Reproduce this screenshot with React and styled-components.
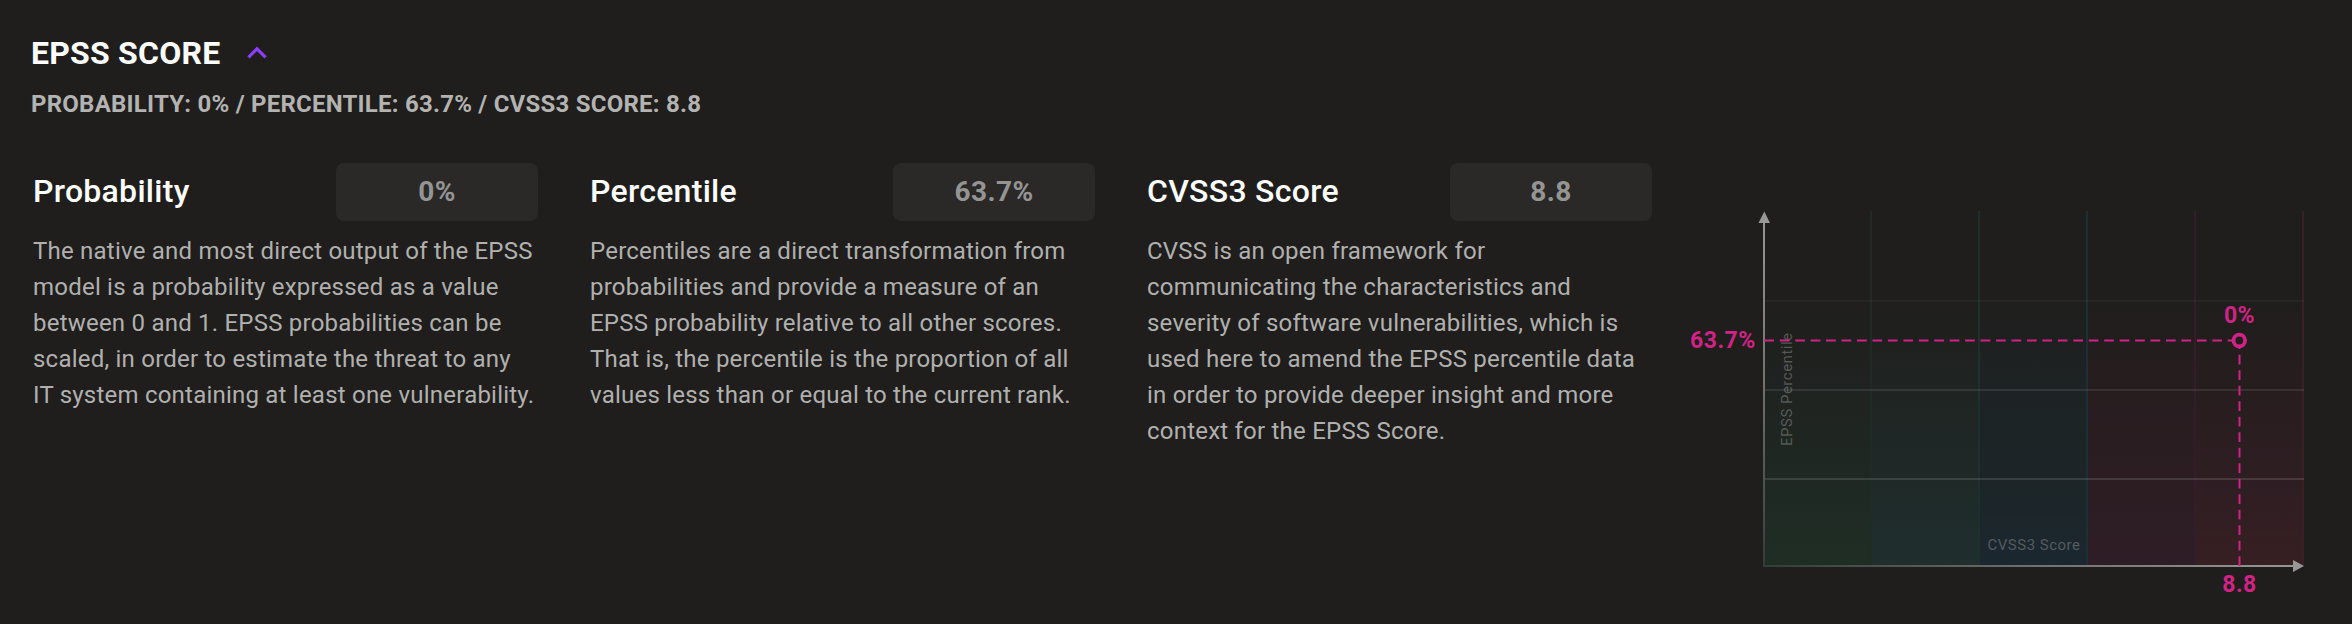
import React from "react";
import styled, { createGlobalStyle } from "styled-components";

const Global = createGlobalStyle`
  *, *::before, *::after { box-sizing: border-box; }
  body { margin: 0; background: #1f1e1c; }
`;

const Panel = styled.section`
  width: 2352px;
  height: 624px;
  padding: 35px 0 0 31px;
  background: #1f1e1c;
  font-family: Roboto, sans-serif;
  overflow: hidden;
`;

const Header = styled.header`
  display: flex;
  align-items: center;
  height: 36px;
  gap: 26px;
`;

const Title = styled.h2`
  margin: 0;
  font-size: 32px;
  line-height: 36px;
  font-weight: 700;
  letter-spacing: 0.22px;
  color: #fff;
`;

const Chevron = styled.svg`
  display: block;
  width: 22px;
  height: 14px;
  fill: none;
  stroke: #8b3dff;
  stroke-width: 3.2;
`;

const Summary = styled.p`
  margin: 18px 0 0;
  font-size: 24px;
  line-height: 30px;
  font-weight: 700;
  letter-spacing: 0.23px;
  color: #b3b3b2;
`;

const Body = styled.div`
  display: flex;
  align-items: flex-start;
  margin-top: 44px;
`;

const Columns = styled.div`
  display: grid;
  grid-template-columns: repeat(3, 507px);
  column-gap: 50px;
`;

const Metric = styled.article`
  padding-left: 2px;
`;

const MetricHead = styled.div`
  display: flex;
  align-items: center;
  justify-content: space-between;
  height: 58px;
`;

const MetricName = styled.h3`
  margin: 0;
  padding-bottom: 2px;
  font-size: 32px;
  line-height: 40px;
  font-weight: 500;
  letter-spacing: 0.28px;
  color: #fff;
`;

const Value = styled.output`
  display: flex;
  align-items: center;
  justify-content: center;
  width: 202px;
  height: 58px;
  padding-bottom: 1px;
  border-radius: 8px;
  background: #2a2928;
  color: #949493;
  font-size: 28px;
  font-weight: 700;
  letter-spacing: 0.4px;
`;

const Description = styled.p`
  margin: 12px 0 0;
  font-size: 24px;
  line-height: 36px;
  letter-spacing: 0.22px;
  white-space: pre;
  color: #b0b0af;
`;

const Chart = styled.svg`
  display: block;
  width: 650px;
  height: 400px;
  margin: 37px 0 0 50px;
  overflow: visible;
`;

const AxisLabel = styled.text`
  font-size: 15px;
  letter-spacing: 0.5px;
  fill: #fff;
  fill-opacity: 0.25;
`;

const PointLabel = styled.text`
  font-size: 23px;
  font-weight: 700;
  letter-spacing: 0.5px;
  fill: #d02385;
`;

const metrics = [
  {
    name: "Probability",
    value: "0%",
    text: "The native and most direct output of the EPSS\nmodel is a probability expressed as a value\nbetween 0 and 1. EPSS probabilities can be\nscaled, in order to estimate the threat to any\nIT system containing at least one vulnerability.",
  },
  {
    name: "Percentile",
    value: "63.7%",
    text: "Percentiles are a direct transformation from\nprobabilities and provide a measure of an\nEPSS probability relative to all other scores.\nThat is, the percentile is the proportion of all\nvalues less than or equal to the current rank.",
  },
  {
    name: "CVSS3 Score",
    value: "8.8",
    text: "CVSS is an open framework for\ncommunicating the characteristics and\nseverity of software vulnerabilities, which is\nused here to amend the EPSS percentile data\nin order to provide deeper insight and more\ncontext for the EPSS Score.",
  },
];

const bands = [
  { x: 1765, id: "green", low: "#1f2e25", deep: "#1f2923", mid: "#1f2321", line: "#1f2b25" },
  { x: 1872, id: "teal", low: "#1f2f2e", deep: "#1f2a29", mid: "#1f2422", line: "#1e302d" },
  { x: 1980, id: "blue", low: "#1b2730", deep: "#1c2528", mid: "#1d2324", line: "#1b2f34" },
  { x: 2088, id: "purple", low: "#2e1d26", deep: "#2c1d23", mid: "#271d1f", line: "#341c29" },
  { x: 2196, id: "red", low: "#371f22", deep: "#2f1e23", mid: "#271d1f", line: "#391f26" },
];

const rows = [
  { y: 301, opacity: 0.04 },
  { y: 390, opacity: 0.09 },
  { y: 479, opacity: 0.12 },
];

function ScoreChart() {
  return (
    <Chart viewBox="1702 200 650 400" role="img" aria-label="EPSS percentile by CVSS3 score">
      <defs>
        {bands.map((b) => (
          <linearGradient key={b.id} id={b.id} x1="0" y1="212" x2="0" y2="566" gradientUnits="userSpaceOnUse">
            <stop offset="0.24" stopColor="#1f1e1c" />
            <stop offset="0.5" stopColor={b.mid} />
            <stop offset="0.8" stopColor={b.deep} />
            <stop offset="1" stopColor={b.low} />
          </linearGradient>
        ))}
        <linearGradient id="yAxis" x1="0" y1="212" x2="0" y2="566" gradientUnits="userSpaceOnUse">
          <stop offset="0" stopColor="#989896" />
          <stop offset="0.5" stopColor="#70706e" />
          <stop offset="1" stopColor="#343c37" />
        </linearGradient>
        <linearGradient id="xAxis" x1="1763" y1="0" x2="2304" y2="0" gradientUnits="userSpaceOnUse">
          <stop offset="0" stopColor="#343c37" />
          <stop offset="0.5" stopColor="#70706e" />
          <stop offset="1" stopColor="#989896" />
        </linearGradient>
      </defs>
      {bands.map((b) => (
        <rect key={b.id} x={b.x} y="212" width={b.id === "green" ? 107 : 108} height="353" fill={`url(#${b.id})`} />
      ))}
      {bands.map((b) => (
        <rect key={b.id} x={b.x + (b.id === "green" ? 105 : 106)} y="211" width="2" height="354" fill={b.line} />
      ))}
      {rows.map((r) => (
        <rect key={r.y} x="1763" y={r.y - 1} width="541" height="2" fill="#fff" fillOpacity={r.opacity} />
      ))}
      <AxisLabel x="1987.5" y="550">CVSS3 Score</AxisLabel>
      <AxisLabel transform="translate(1792 446) rotate(-90)">EPSS Percentile</AxisLabel>
      <rect x="1763" y="218" width="2" height="348" fill="url(#yAxis)" />
      <rect x="1763" y="565" width="536" height="2" fill="url(#xAxis)" />
      <path d="M1764.3 211.5L1770 223H1758.5Z" fill="#989896" />
      <path d="M2304 566L2293 560V572Z" fill="#989896" />
      <path d="M1764.3 340.5H2232" stroke="#d02385" strokeWidth="2" strokeDasharray="9.7 5.75" />
      <path d="M2239.5 566V348" stroke="#d02385" strokeWidth="2" strokeDasharray="9.7 5.8" />
      <circle cx="2239.3" cy="340.5" r="5.8" fill="none" stroke="#d02385" strokeWidth="3.8" />
      <PointLabel x="1690" y="348">63.7%</PointLabel>
      <PointLabel x="2239.5" y="323" textAnchor="middle">0%</PointLabel>
      <PointLabel x="2239.5" y="592" textAnchor="middle">8.8</PointLabel>
    </Chart>
  );
}

export default function App() {
  return (
    <>
      <Global />
      <Panel>
        <Header>
          <Title>EPSS SCORE</Title>
          <Chevron viewBox="0 0 22 14">
            <path d="M2.4 11.3L11 2.8L19.6 11.3" />
          </Chevron>
        </Header>
        <Summary>PROBABILITY: 0% / PERCENTILE: 63.7% / CVSS3 SCORE: 8.8</Summary>
        <Body>
          <Columns>
            {metrics.map((m) => (
              <Metric key={m.name}>
                <MetricHead>
                  <MetricName>{m.name}</MetricName>
                  <Value>{m.value}</Value>
                </MetricHead>
                <Description>{m.text}</Description>
              </Metric>
            ))}
          </Columns>
          <ScoreChart />
        </Body>
      </Panel>
    </>
  );
}
